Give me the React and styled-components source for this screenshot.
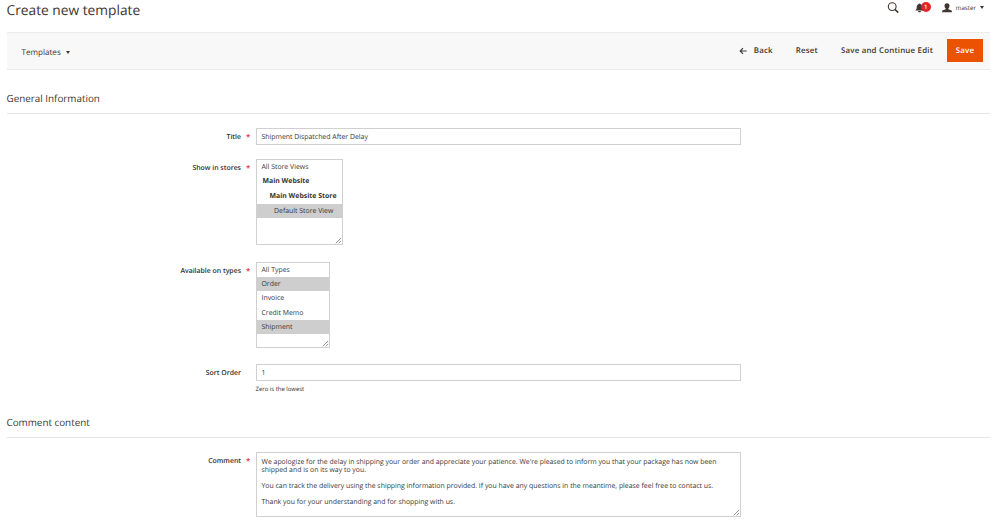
import React from "react";
import styled, { createGlobalStyle, css } from "styled-components";

const Global = createGlobalStyle`
  * { box-sizing: border-box; }
  html, body { margin: 0; background: #fff; overflow: hidden; }
  body {
    font-family: "Open Sans", "Noto Sans", sans-serif;
    color: #41362f;
    font-size: 6.92px;
    text-rendering: geometricPrecision;
  }
`;

const Page = styled.div`
  width: 1000px;
  height: 526px;
  padding: 0 10px 0 6.5px;
  overflow: hidden;
`;

const Header = styled.header`
  display: flex;
  justify-content: space-between;
  height: 32px;
`;

const Title = styled.h1`
  margin: 0;
  font-size: 13.75px;
  font-weight: 400;
  line-height: 21px;
  white-space: nowrap;
`;

const UserTools = styled.div`
  display: flex;
  align-items: center;
  height: 15px;
  padding-right: 6px;
`;

const Bell = styled.span`
  position: relative;
  display: flex;
  width: 16px;
  height: 11px;
  margin: 0 10.5px 0 16px;
`;

const Badge = styled.span`
  position: absolute;
  left: 5.5px;
  top: -0.5px;
  width: 10px;
  height: 10px;
  border-radius: 50%;
  background: #e22626;
  color: #fff;
  font-size: 6px;
  font-weight: 600;
  line-height: 10px;
  text-align: center;
`;

const UserName = styled.span`
  margin: 0 4px 0 4px;
  font-size: 6.2px;
  line-height: 10px;
`;

const Caret = styled.span`
  width: 0;
  height: 0;
  border: solid transparent;
  border-width: 3px 2px 0;
  border-top-color: #41362f;
`;

const Toolbar = styled.div`
  display: flex;
  align-items: center;
  height: 38px;
  padding: 0 7px 0 15px;
  background: #f8f8f8;
  border: solid #ebebeb;
  border-width: 1px 0;
`;

const Switcher = styled.div`
  display: flex;
  align-items: center;
  gap: 5px;
  margin-right: auto;
  padding-top: 2px;
  font-size: 8.1px;
`;

const Action = styled.button`
  display: flex;
  align-items: center;
  gap: 7px;
  height: 23px;
  margin: -1px 0 0 ${(p) => p.$gap || 0}px;
  padding: 1.5px 0 0;
  border: 0;
  background: none;
  color: #41362f;
  font: 600 7.9px "Open Sans", sans-serif;
  letter-spacing: 0.2px;
  text-rendering: inherit;
  white-space: nowrap;
  ${(p) =>
    p.$primary &&
    css`
      justify-content: center;
      width: 36px;
      background: #eb5202;
      color: #fff;
    `}
`;

const Section = styled.section`
  height: ${(p) => p.$height}px;
  padding-top: 15px;
`;

const SectionTitle = styled.h2`
  height: 29px;
  margin: 0;
  border-bottom: 1px solid #e6e6e6;
  font-size: 9.85px;
  font-weight: 400;
  line-height: 26px;
`;

const Field = styled.div`
  display: flex;
  align-items: flex-start;
  margin-top: ${(p) => p.$top}px;
`;

const Label = styled.label`
  position: relative;
  width: 234.5px;
  height: 17px;
  margin-right: 14.5px;
  padding-top: 1.5px;
  color: #303030;
  font-weight: 600;
  line-height: 16px;
  text-align: right;
  ${(p) =>
    p.$required &&
    css`
      &::after {
        content: "*";
        position: absolute;
        left: 100%;
        top: 2px;
        margin-left: 5px;
        color: #e22626;
        font-size: 8px;
      }
    `}
`;

const control = css`
  position: relative;
  border: 1px solid #d0d0d0;
  background: #fff;
  color: #363636;
`;

const Input = styled.div`
  ${control}
  width: 485px;
  height: 17px;
  padding-left: 5px;
  line-height: 17px;
`;

const Listbox = styled.div`
  ${control}
  width: ${(p) => p.$width}px;
  height: 86px;
`;

const Option = styled.div`
  height: ${(p) => p.$height || 14.2}px;
  padding-left: ${(p) => p.$indent || 5}px;
  background: ${(p) => (p.$selected ? "#cecece" : "transparent")};
  font-weight: ${(p) => (p.$group ? 700 : 400)};
  line-height: ${(p) => (p.$height || 14.2) + 2}px;
  white-space: nowrap;
`;

const TextArea = styled.div`
  ${control}
  width: 485px;
  height: 65px;
  padding: 5.7px 5px 0;
  line-height: 8.1px;
  white-space: pre;
`;

const GripIcon = styled.svg`
  position: absolute;
  right: 0;
  bottom: 0;
`;

const Note = styled.div`
  margin-top: 4px;
  color: #303030;
  font-size: 5.95px;
  line-height: 8px;
`;

const Grip = () => (
  <GripIcon width="7" height="7" viewBox="0 0 7 7" stroke="#777" strokeWidth=".8">
    <path d="M.8 6.3 6.2.9M3.8 6.3 6.2 3.9" />
  </GripIcon>
);

const SearchIcon = () => (
  <svg width="12" height="12" viewBox="0 0 12 12" fill="none" stroke="#41362f">
    <circle cx="5.2" cy="4.6" r="3.9" strokeWidth="1.1" />
    <path d="m8 7.4 3.2 3.2" strokeWidth="1.5" />
  </svg>
);

const BellIcon = () => (
  <svg width="9" height="11" viewBox="0 0 9 11" fill="#41362f">
    <path d="M4.5 1.4c.5 0 .8.3.8.7 1.4.4 2 1.6 2 3.1 0 1.8.5 2.5 1.5 3.3H.2c1-.8 1.5-1.5 1.5-3.3 0-1.5.7-2.7 2-3.1 0-.4.3-.7.8-.7zM3 9h3c-.1.8-.7 1.3-1.5 1.3S3.1 9.8 3 9z" />
  </svg>
);

const UserIcon = () => (
  <svg width="10" height="10" viewBox="0 0 10 10" fill="#41362f">
    <path d="M5 .2c1.7 0 2.5 1 2.5 2.5 0 1.2-.5 2.2-1.2 2.8v.8l2.7 1c.7.3.9.7.9 1.3v.7H.1v-.7c0-.6.2-1 .9-1.3l2.7-1v-.8C3 4.9 2.5 3.9 2.5 2.7 2.5 1.2 3.3.2 5 .2z" />
  </svg>
);

const BackIcon = () => (
  <svg width="8" height="8" viewBox="0 0 8 8" fill="none" stroke="#41362f" strokeWidth="1.1">
    <path d="M7.6 4H1.4M4 1.2 1.2 4 4 6.8" />
  </svg>
);

const comment = `We apologize for the delay in shipping your order and appreciate your patience. We're pleased to inform you that your package has now been
shipped and is on its way to you.

You can track the delivery using the shipping information provided. If you have any questions in the meantime, please feel free to contact us.

Thank you for your understanding and for shopping with us.`;

export default function App() {
  return (
    <Page>
      <Global />
      <Header>
        <Title>Create new template</Title>
        <UserTools>
          <SearchIcon />
          <Bell>
            <BellIcon />
            <Badge>1</Badge>
          </Bell>
          <UserIcon />
          <UserName>master</UserName>
          <Caret />
        </UserTools>
      </Header>
      <Toolbar>
        <Switcher>
          Templates <Caret />
        </Switcher>
        <Action>
          <BackIcon /> Back
        </Action>
        <Action $gap={23}>Reset</Action>
        <Action $gap={23}>Save and Continue Edit</Action>
        <Action $gap={14} $primary>Save</Action>
      </Toolbar>
      <Section $height={324}>
        <SectionTitle>General Information</SectionTitle>
        <Field $top={14}>
          <Label $required>Title</Label>
          <Input>Shipment Dispatched After Delay</Input>
        </Field>
        <Field $top={14}>
          <Label $required>Show in stores</Label>
          <Listbox $width={87}>
            <Option>All Store Views</Option>
            <Option $group $indent={6} $height={14.8}>Main Website</Option>
            <Option $group $indent={13} $height={14.8}>Main Website Store</Option>
            <Option $selected $indent={17.5}>Default Store View</Option>
            <Grip />
          </Listbox>
        </Field>
        <Field $top={17}>
          <Label $required>Available on types</Label>
          <Listbox $width={74}>
            <Option>All Types</Option>
            <Option $selected>Order</Option>
            <Option>Invoice</Option>
            <Option>Credit Memo</Option>
            <Option $selected>Shipment</Option>
            <Grip />
          </Listbox>
        </Field>
        <Field $top={16}>
          <Label>Sort Order</Label>
          <div>
            <Input>1</Input>
            <Note>Zero is the lowest</Note>
          </div>
        </Field>
      </Section>
      <Section $height={120}>
        <SectionTitle>Comment content</SectionTitle>
        <Field $top={14}>
          <Label $required>Comment</Label>
          <TextArea>
            {comment}
            <Grip />
          </TextArea>
        </Field>
      </Section>
    </Page>
  );
}
